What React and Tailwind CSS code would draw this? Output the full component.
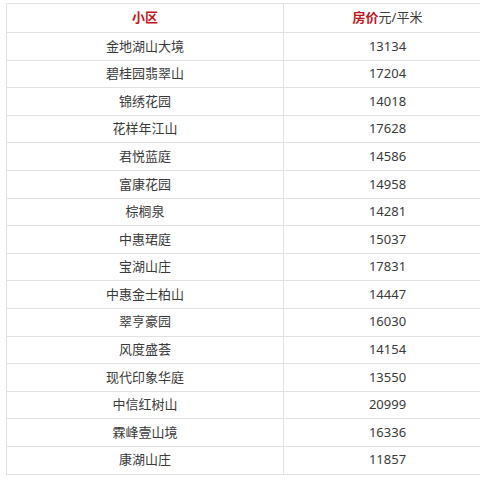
const rows = [
  ["金地湖山大境", "13134"],
  ["碧桂园翡翠山", "17204"],
  ["锦绣花园", "14018"],
  ["花样年江山", "17628"],
  ["君悦蓝庭", "14586"],
  ["富康花园", "14958"],
  ["棕榈泉", "14281"],
  ["中惠珺庭", "15037"],
  ["宝湖山庄", "17831"],
  ["中惠金士柏山", "14447"],
  ["翠亨豪园", "16030"],
  ["风度盛荟", "14154"],
  ["现代印象华庭", "13550"],
  ["中信红树山", "20999"],
  ["霖峰壹山境", "16336"],
  ["康湖山庄", "11857"],
];

export default function App() {
  return (
    <div className="w-[480px] h-[480px] overflow-hidden bg-white pt-[3px] pl-[6px] font-['Noto_Sans','Noto_Sans_CJK_SC',sans-serif] text-[13px] text-[#3a3a3a]">
      <table className="w-[485px] table-fixed border-collapse">
        <colgroup>
          <col className="w-[277px]" />
          <col className="w-[208px]" />
        </colgroup>
        <thead>
          <tr className="h-[29px]">
            <th className="border border-[#e2e2e2] font-bold text-[#c0161c] text-center p-0">
              小区
            </th>
            <th className="border border-[#e2e2e2] text-center p-0 font-normal">
              <span className="font-bold text-[#c0161c]">房价</span>元/平米
            </th>
          </tr>
        </thead>
        <tbody>
          {rows.map(([name, price]) => (
            <tr key={name} className="h-[27.6px]">
              <td className="border border-[#e2e2e2] text-center p-0">{name}</td>
              <td className="border border-[#e2e2e2] text-center p-0">{price}</td>
            </tr>
          ))}
        </tbody>
      </table>
    </div>
  );
}
